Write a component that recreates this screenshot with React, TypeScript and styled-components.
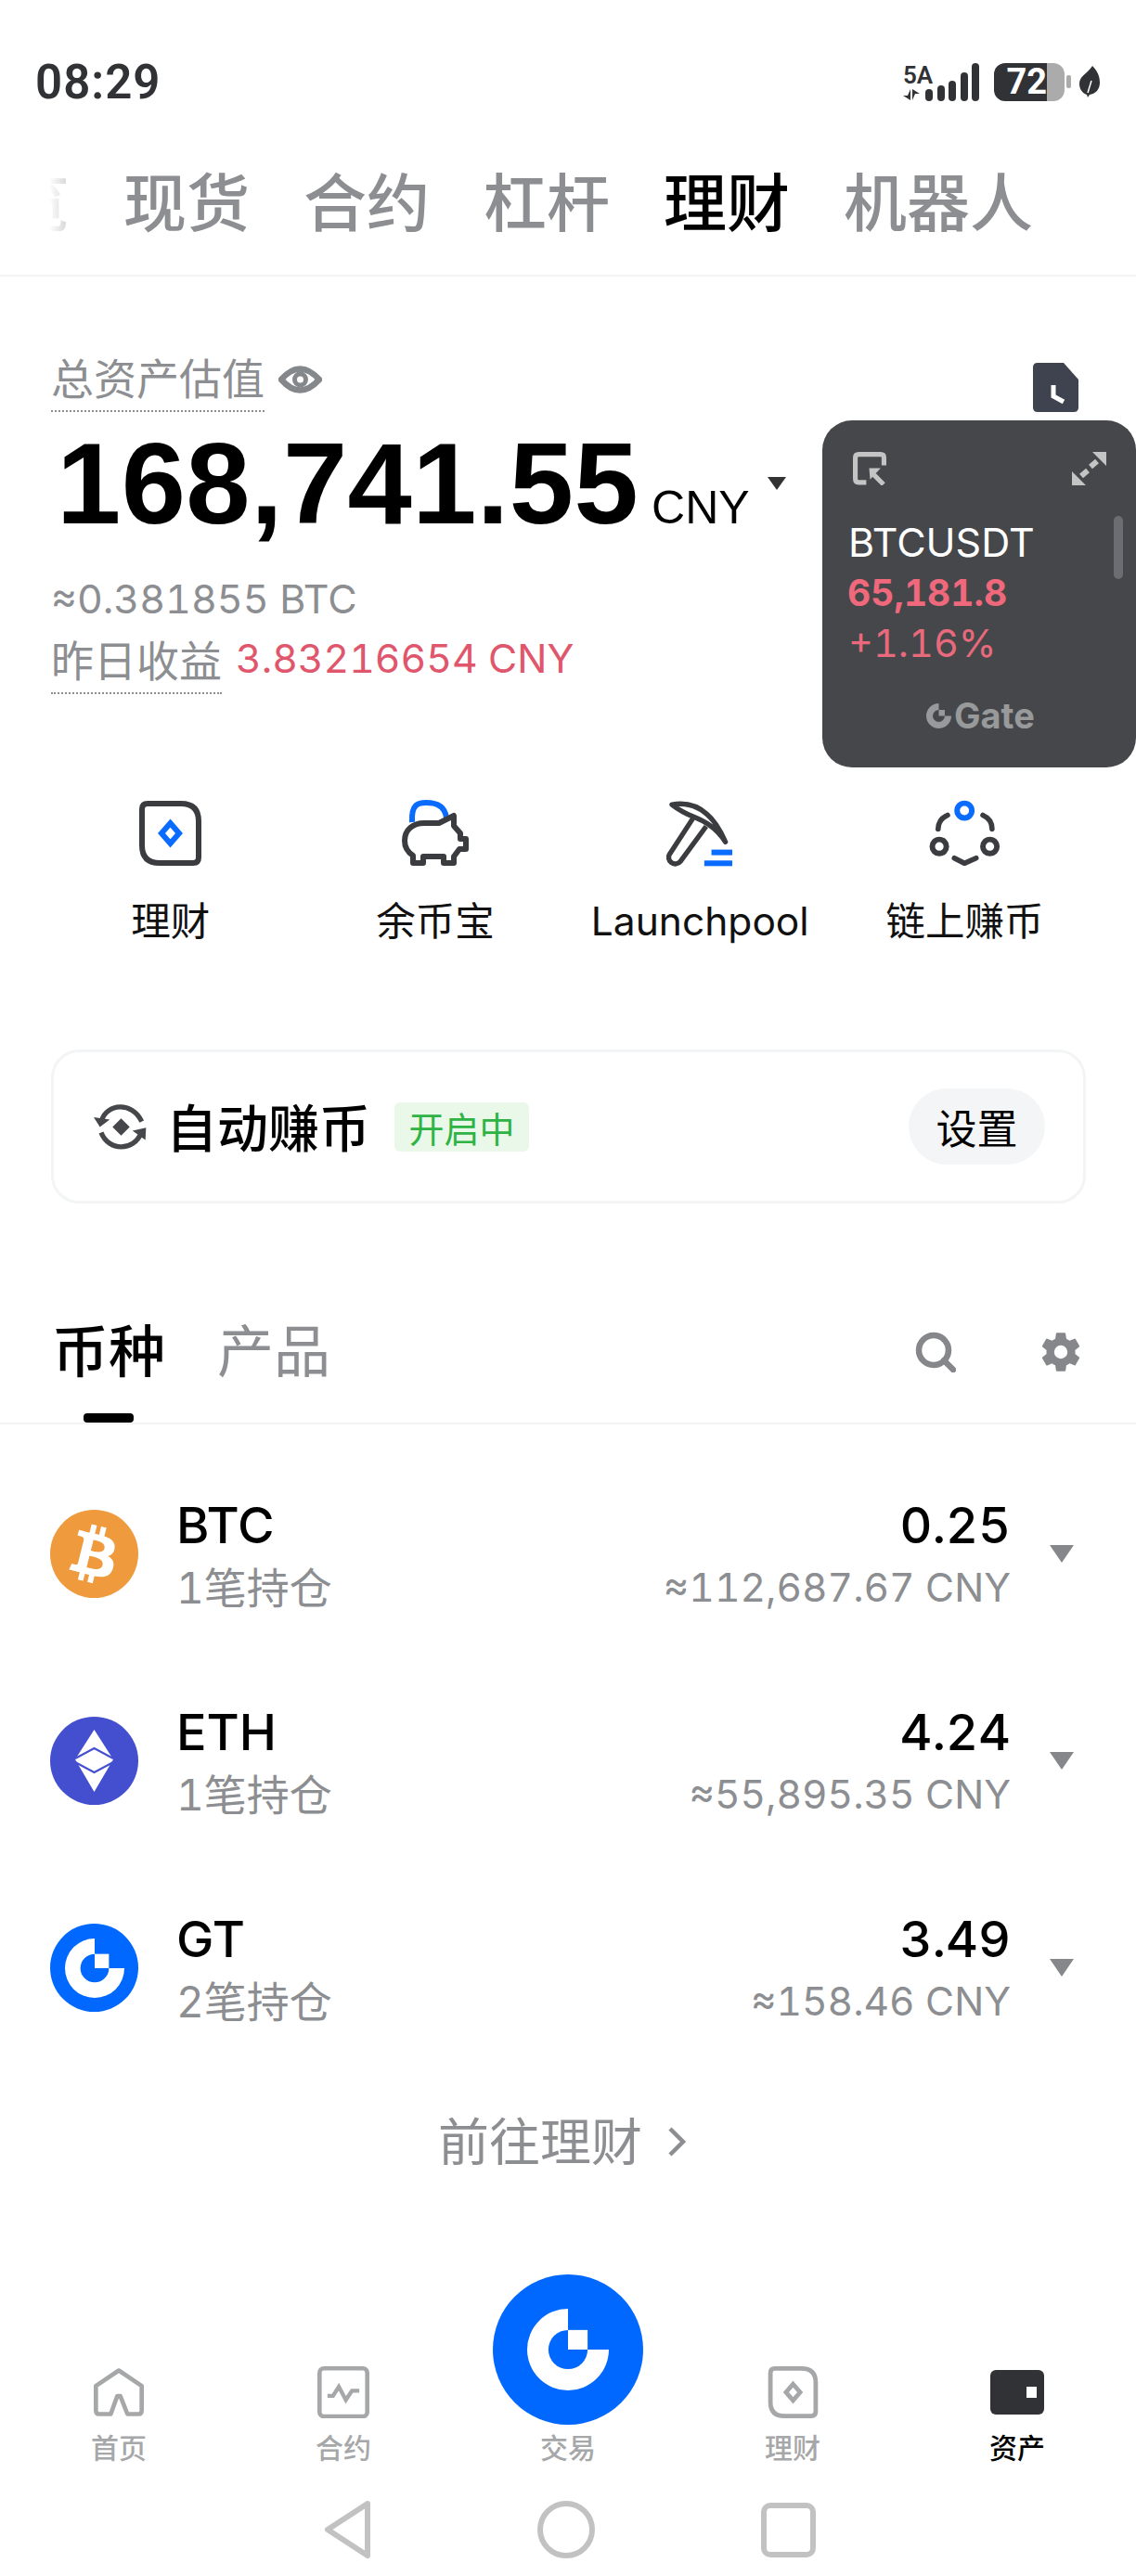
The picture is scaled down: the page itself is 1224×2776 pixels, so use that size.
import React from "react";
import styled, { createGlobalStyle } from "styled-components";
import { FaBtc } from "react-icons/fa";
import { IoSettingsSharp } from "react-icons/io5";

const FONT = `Inter, "Noto Sans CJK SC", sans-serif`;
const GRAY = "#8c8e91";
const DARK = "#3a3c3f";
const BLUE = "#0a6cff";
const NAV_GRAY = "#a6a7a9";

const GlobalStyle = createGlobalStyle`
  html, body {
    margin: 0;
    padding: 0;
    background: #fff;
  }
  * {
    box-sizing: border-box;
  }
`;

const Page = styled.div`
  position: relative;
  width: 1224px;
  height: 2776px;
  overflow: hidden;
  display: flex;
  flex-direction: column;
  background: #fff;
  color: #000;
  font-family: ${FONT};
  font-variant-numeric: tabular-nums;
`;

// Status bar
const StatusBar = styled.div`
  height: 136px;
  padding: 40px 39px 0 38px;
  display: flex;
  align-items: center;
  justify-content: space-between;
`;

const Clock = styled.div`
  font-size: 51px;
  font-weight: 600;
  color: #303235;
  font-family: Roboto, sans-serif;
  letter-spacing: 1px;
`;

const StatusIcons = styled.div`
  display: flex;
  align-items: center;
`;

const NetType = styled.div`
  width: 34px;
  display: flex;
  flex-direction: column;
  align-items: flex-start;
  gap: 3px;
  margin-right: -10px;
  font-size: 26px;
  line-height: 24px;
  font-weight: 600;
  color: #303235;
  font-family: Roboto, sans-serif;
`;

const Bars = styled.div`
  height: 41px;
  margin-right: 16px;
  display: flex;
  align-items: flex-end;
  gap: 4.5px;
`;

const Bar = styled.span<{ $h: number }>`
  width: 8px;
  height: ${(p) => p.$h}px;
  border-radius: 4px;
  background: #303235;
`;

const Battery = styled.div`
  width: 76px;
  height: 41px;
  border-radius: 12px;
  padding-right: 19px;
  display: flex;
  align-items: center;
  justify-content: flex-end;
  background: linear-gradient(90deg, #303235 0 57px, #ababab 57px);
  color: #fff;
  font-size: 38px;
  font-weight: 700;
  font-family: Roboto, sans-serif;
`;

const BatteryNub = styled.span`
  width: 5px;
  height: 14px;
  margin: 0 9px 0 2px;
  border-radius: 2px;
  background: #ababab;
`;

// Top tabs
const TopTabs = styled.div`
  height: 162px;
  padding: 6px 0 0 53px;
  display: flex;
  align-items: center;
  gap: 58px;
  border-bottom: 2px solid #f3f3f3;
`;

const TopTab = styled.div<{ $active?: boolean }>`
  font-size: 68px;
  line-height: 80px;
  font-weight: 500;
  color: ${(p) => (p.$active ? "#000" : GRAY)};
`;

const ClippedTab = styled(TopTab)`
  width: 22px;
  overflow: hidden;
  display: flex;
  justify-content: flex-end;
  white-space: nowrap;
  color: #d0d0d0;
  mask-image: linear-gradient(90deg, transparent, #000);
`;

// Asset summary
const Summary = styled.section`
  padding: 80px 62px 0 55px;
`;

const LabelRow = styled.div`
  display: flex;
  align-items: center;
`;

const DottedLabel = styled.span`
  font-size: 46px;
  line-height: 60px;
  color: ${GRAY};
  padding-bottom: 4px;
  border-bottom: 2px dotted ${GRAY};
`;

const EyeIcon = styled.svg`
  margin: 0 0 4px 15px;
`;

const DocIcon = styled.svg`
  margin: 13px 0 0 auto;
`;

const AmountRow = styled.div`
  height: 130px;
  margin-top: 12px;
  padding-left: 6px;
  display: flex;
  align-items: baseline;
  line-height: 130px;
`;

const Amount = styled.span`
  font-size: 124.500px;
  font-weight: 700;
  font-family: "Liberation Sans", sans-serif;
  letter-spacing: 0.4px;
`;

const AmountUnit = styled.span`
  margin-left: 14px;
  font-size: 50px;
  font-family: "Liberation Sans", sans-serif;
`;

const Caret = styled.span<{ $w: number; $h: number; $color: string }>`
  width: 0;
  height: 0;
  border-left: ${(p) => p.$w / 2}px solid transparent;
  border-right: ${(p) => p.$w / 2}px solid transparent;
  border-top: ${(p) => p.$h}px solid ${(p) => p.$color};
`;

const UnitCaret = styled(Caret)`
  margin-left: 19px;
  align-self: center;
`;

const BtcValue = styled.div`
  margin-top: 31px;
  font-size: 43px;
  line-height: 56px;
  color: ${GRAY};
`;

const YesterdayRow = styled.div`
  margin-top: 9px;
  display: flex;
  align-items: flex-start;
`;

const Profit = styled.span`
  margin-left: 15px;
  font-size: 42.700px;
  line-height: 56px;
  color: #e0566c;
`;

// Floating market window
const MarketWidget = styled.aside`
  position: absolute;
  top: 453px;
  right: 0;
  width: 338px;
  height: 374px;
  padding-top: 34px;
  border-radius: 32px;
  background: #45474a;
`;

const WidgetTools = styled.div`
  height: 36px;
  padding: 0 32px 0 33px;
  display: flex;
  justify-content: space-between;
`;

const WidgetSymbol = styled.div`
  margin: 36px 0 0 28px;
  font-size: 43px;
  line-height: 50px;
  color: #fff;
`;

const WidgetPrice = styled.div`
  margin: 5px 0 0 27px;
  font-size: 39px;
  line-height: 50px;
  font-weight: 700;
  color: #f0687c;
`;

const WidgetChange = styled.div`
  margin: 4px 0 0 28px;
  font-size: 41.500px;
  line-height: 50px;
  color: #e86a7c;
`;

const WidgetBrand = styled.div`
  margin-top: 38px;
  padding-left: 112px;
  display: flex;
  align-items: center;
  gap: 3px;
  height: 30px;
  font-size: 38px;
  font-weight: 700;
  color: #97999b;
`;

const WidgetScroll = styled.span`
  position: absolute;
  top: 103px;
  right: 14px;
  width: 10px;
  height: 68px;
  border-radius: 5px;
  background: #6b6d72;
`;

// Quick actions
const Actions = styled.div`
  margin-top: 113px;
  padding-left: 41px;
  display: grid;
  grid-template-columns: repeat(4, 285.3px);
`;

const Action = styled.div`
  display: flex;
  flex-direction: column;
  align-items: center;
  gap: 34px;
`;

const ActionIcon = styled.div`
  height: 73px;
  display: flex;
  align-items: center;
  justify-content: center;
`;

const ActionLabel = styled.div`
  font-size: 42.500px;
  line-height: 50px;
  white-space: nowrap;
  color: #111;
`;

// Auto earn card
const AutoCard = styled.div`
  margin: 113px 54px 0 55px;
  height: 166px;
  padding: 0 41px 0 43px;
  display: flex;
  align-items: center;
  border: 3px solid #f3f4f5;
  border-radius: 30px;
`;

const AutoTitle = styled.div`
  margin: 0 0 4px 20px;
  font-size: 55px;
  font-weight: 500;
`;

const StatusBadge = styled.div`
  margin-left: 26px;
  width: 145px;
  height: 53px;
  display: flex;
  align-items: center;
  justify-content: center;
  border-radius: 6px;
  background: #e9f8e9;
  color: #2fb344;
  font-size: 38px;
`;

const SettingsButton = styled.button`
  margin-left: auto;
  width: 147px;
  height: 82px;
  border: none;
  border-radius: 41px;
  background: #f4f5f6;
  color: #000;
  font-family: ${FONT};
  font-size: 44px;
`;

// List tabs
const ListTabs = styled.div`
  margin-top: 80px;
  padding: 50px 58px 0 56px;
  display: flex;
  align-items: flex-start;
  gap: 56px;
  border-bottom: 2px solid #f3f3f3;
`;

const ListTab = styled.div<{ $active?: boolean }>`
  display: flex;
  flex-direction: column;
  align-items: center;
  font-size: 61px;
  line-height: 60px;
  font-weight: ${(p) => (p.$active ? 500 : 400)};
  color: ${(p) => (p.$active ? "#000" : GRAY)};
`;

const TabMark = styled.span<{ $active?: boolean }>`
  width: 54px;
  height: 10px;
  margin-top: 36px;
  border-radius: 4px;
  background: ${(p) => (p.$active ? "#000" : "transparent")};
`;

const ListTools = styled.div`
  margin-left: auto;
  height: 60px;
  display: flex;
  align-items: center;
  gap: 90px;
`;

// Coin rows
const CoinList = styled.div`
  margin-top: 28px;
`;

const CoinRow = styled.div`
  height: 223px;
  padding: 0 67px 0 54px;
  display: flex;
  align-items: center;
`;

const CoinBadge = styled.div<{ $bg: string }>`
  width: 95px;
  height: 95px;
  flex: none;
  display: flex;
  align-items: center;
  justify-content: center;
  border-radius: 50%;
  background: ${(p) => p.$bg};
  color: #fff;
`;

const CoinText = styled.div<{ $right?: boolean }>`
  display: flex;
  flex-direction: column;
  align-items: ${(p) => (p.$right ? "flex-end" : "flex-start")};
  margin: ${(p) => (p.$right ? "0 42px 0 auto" : "0 0 0 41px")};
`;

const CoinMain = styled.div`
  font-size: 54px;
  line-height: 60px;
  font-weight: 500;
`;

const CoinSub = styled.div<{ $value?: boolean }>`
  margin-top: 12px;
  font-size: ${(p) => (p.$value ? 42.5 : 46)}px;
  line-height: 50px;
  color: ${GRAY};
`;

const MoreLink = styled.div`
  margin-top: 41px;
  padding-right: 12px;
  display: flex;
  align-items: center;
  justify-content: center;
  gap: 26px;
  font-size: 55px;
  line-height: 70px;
  color: ${GRAY};
`;

// Bottom navigation
const BottomArea = styled.div`
  margin-top: auto;
  padding-bottom: 18px;
`;

const TabBar = styled.nav`
  padding: 0 7px;
  display: grid;
  grid-template-columns: repeat(5, 242px);
  align-items: end;
`;

const NavItem = styled.div<{ $active?: boolean }>`
  display: flex;
  flex-direction: column;
  align-items: center;
  font-size: 30px;
  line-height: 40px;
  font-weight: 500;
  color: ${(p) => (p.$active ? "#000" : NAV_GRAY)};
`;

const NavIcon = styled.div`
  height: 60px;
  margin-bottom: 10px;
  display: flex;
  align-items: center;
  justify-content: center;
`;

const TradeCircle = styled.div`
  width: 162px;
  height: 162px;
  margin-bottom: 5px;
  display: flex;
  align-items: center;
  justify-content: center;
  border-radius: 50%;
  background: #0068ff;
`;

const SystemNav = styled.div`
  margin-top: 36px;
  padding-left: 4px;
  height: 64px;
  display: flex;
  align-items: center;
  justify-content: center;
  gap: 179px;
`;

const GateMark = ({ size, color }: { size: number; color: string }) => (
  <svg width={size} height={size} viewBox="0 0 100 100">
    <path d="M50 0A50 50 0 1 0 100 50H74A24 24 0 1 1 50 26Z" fill={color} />
    <rect x="50" y="26" width="24" height="24" fill={color} />
  </svg>
);

const FinanceCard = ({ w, h, sw, color, accent }: { w: number; h: number; sw: number; color: string; accent: string }) => (
  <svg width={w} height={h} viewBox="0 0 67 70">
    <path d="M9 3H45Q64 3 64 22V61Q64 67 58 67H22Q3 67 3 48V9Q3 3 9 3Z" fill="none" stroke={color} strokeWidth={sw} />
    <path d="M33.500 24L43 35L33.500 46L24 35Z" fill="none" stroke={accent} strokeWidth={sw} />
  </svg>
);

const Coins = [
  { symbol: "BTC", sub: "1笔持仓", amount: "0.25", value: "≈112,687.67 CNY" },
  { symbol: "ETH", sub: "1笔持仓", amount: "4.24", value: "≈55,895.35 CNY" },
  { symbol: "GT", sub: "2笔持仓", amount: "3.49", value: "≈158.46 CNY" },
];

const coinIcon = (symbol: string) => {
  if (symbol === "BTC") {
    return (
      <CoinBadge $bg="#f09a3e">
        <FaBtc size={62} style={{ transform: "rotate(14deg)" }} />
      </CoinBadge>
    );
  }
  if (symbol === "ETH") {
    return (
      <CoinBadge $bg="#444fd0">
        <svg width="95" height="95" viewBox="0 0 95 95">
          <path d="M47.500 14L68 46L47.500 81L27 46Z" fill="#fff" />
          <path d="M27 45L47.500 34L68 45" fill="none" stroke="#444fd0" strokeWidth="2" />
          <path d="M27 49L47.500 60L68 49" fill="none" stroke="#444fd0" strokeWidth="2" />
        </svg>
      </CoinBadge>
    );
  }
  return (
    <CoinBadge $bg="#0068ff">
      <GateMark size={64} color="#fff" />
    </CoinBadge>
  );
};

export default function App() {
  return (
    <Page>
      <GlobalStyle />

      <StatusBar>
        <Clock>08:29</Clock>
        <StatusIcons>
          <NetType>
            5A
            <svg width="18" height="12" viewBox="0 0 18 12">
              <path d="M8 0V12L0 7H5ZM10 12V0L18 5H13Z" fill="#303235" />
            </svg>
          </NetType>
          <Bars>
            {[13, 17, 22, 31, 41].map((h) => (
              <Bar key={h} $h={h} />
            ))}
          </Bars>
          <Battery>72</Battery>
          <BatteryNub />
          <svg width="22" height="34" viewBox="0 0 22 34">
            <path d="M14 0C20 6 22 12 22 18C22 26 17 30 11 31L9 34L8 31C3 29 0 25 0 19C0 11 9 8 14 0Z" fill="#303235" />
            <path d="M9 29L13 16" stroke="#fff" strokeWidth="1.500" />
          </svg>
        </StatusIcons>
      </StatusBar>

      <TopTabs>
        <ClippedTab>总览</ClippedTab>
        <TopTab>现货</TopTab>
        <TopTab>合约</TopTab>
        <TopTab>杠杆</TopTab>
        <TopTab $active>理财</TopTab>
        <TopTab>机器人</TopTab>
      </TopTabs>

      <Summary>
        <LabelRow>
          <DottedLabel>总资产估值</DottedLabel>
          <EyeIcon width="47" height="30" viewBox="0 0 47 30">
            <path d="M3 15Q23 -8 44 15Q23 38 3 15Z" fill="none" stroke="#85888b" strokeWidth="6.500" strokeLinejoin="round" />
            <circle cx="23.500" cy="15" r="6" fill="none" stroke="#85888b" strokeWidth="5" />
          </EyeIcon>
          <DocIcon width="49" height="53" viewBox="0 0 49 53">
            <path d="M5 0H33L49 18V48Q49 53 44 53H5Q0 53 0 48V5Q0 0 5 0Z" fill="#3f4350" />
            <path d="M22 24V36L33 42" fill="none" stroke="#fff" strokeWidth="5" />
          </DocIcon>
        </LabelRow>
        <AmountRow>
          <Amount>168,741.55</Amount>
          <AmountUnit>CNY</AmountUnit>
          <UnitCaret $w={20} $h={14} $color="#333" />
        </AmountRow>
        <BtcValue>≈0.381855 BTC</BtcValue>
        <YesterdayRow>
          <DottedLabel>昨日收益</DottedLabel>
          <Profit>3.83216654 CNY</Profit>
        </YesterdayRow>
      </Summary>

      <MarketWidget>
        <WidgetTools>
          <svg width="36" height="36" viewBox="0 0 35 35">
            <path d="M14 32H6Q2.500 32 2.500 28V6Q2.500 2.500 6 2.500H29Q32.500 2.500 32.500 6V14" fill="none" stroke="#c4c4c4" strokeWidth="5" />
            <path d="M32 34L21 23" stroke="#c4c4c4" strokeWidth="5" />
            <path d="M17 17H29L18 29Z" fill="#c4c4c4" />
          </svg>
          <svg width="37" height="36" viewBox="0 0 37 36">
            <path d="M22 0H37V15ZM0 21V36H15Z" fill="#c4c4c4" />
            <path d="M27 10L20 16M17 20L10 26" stroke="#c4c4c4" strokeWidth="6" />
          </svg>
        </WidgetTools>
        <WidgetScroll />
        <WidgetSymbol>BTCUSDT</WidgetSymbol>
        <WidgetPrice>65,181.8</WidgetPrice>
        <WidgetChange>+1.16%</WidgetChange>
        <WidgetBrand>
          <GateMark size={27} color="#97999b" />
          Gate
        </WidgetBrand>
      </MarketWidget>

      <Actions>
        <Action>
          <ActionIcon>
            <FinanceCard w={67} h={70} sw={6} color={DARK} accent={BLUE} />
          </ActionIcon>
          <ActionLabel>理财</ActionLabel>
        </Action>
        <Action>
          <ActionIcon>
            <svg width="72" height="72" viewBox="0 0 72 72">
              <path d="M11 24C10 4 18 3 26 3C35 3 46 5 48 19" fill="none" stroke={BLUE} strokeWidth="6" />
              <path
                d="M3 44C3 32 12 25 24 25H40L56 17V28L63 36V42H69V53H62L56 61V68H45V61H23V68H12V60C6 56 3 50 3 44Z"
                fill="#fff"
                stroke={DARK}
                strokeWidth="6"
                strokeLinejoin="round"
              />
            </svg>
          </ActionIcon>
          <ActionLabel>余币宝</ActionLabel>
        </Action>
        <Action>
          <ActionIcon>
            <svg width="72" height="72" viewBox="0 0 215 215">
              <path d="M18 15Q130 -5 190 135Q155 80 90 55Q50 40 18 15Z" fill="none" stroke={DARK} strokeWidth="16" strokeLinejoin="round" />
              <path d="M85 60L12 172A20 20 0 0 0 45 198L128 85" fill="none" stroke={DARK} strokeWidth="16" />
              <rect x="145" y="160" width="67" height="18" fill={BLUE} />
              <rect x="122" y="195" width="90" height="18" fill={BLUE} />
            </svg>
          </ActionIcon>
          <ActionLabel>Launchpool</ActionLabel>
        </Action>
        <Action>
          <ActionIcon>
            <svg width="78" height="71" viewBox="905 45 235 215">
              <circle cx="1020" cy="80" r="24" fill="none" stroke={BLUE} strokeWidth="18" />
              <circle cx="938" cy="197" r="23" fill="none" stroke={DARK} strokeWidth="18" />
              <circle cx="1103" cy="197" r="23" fill="none" stroke={DARK} strokeWidth="18" />
              <path
                d="M965 95Q935 108 934 140M1080 95Q1110 108 1110 140M987 235L1020 252L1058 235"
                fill="none"
                stroke={DARK}
                strokeWidth="17"
                strokeLinecap="round"
              />
            </svg>
          </ActionIcon>
          <ActionLabel>链上赚币</ActionLabel>
        </Action>
      </Actions>

      <AutoCard>
        <svg width="58" height="53" viewBox="36 30 175 160">
          <path d="M62 88C78 35 160 25 192 92M60 128C85 190 165 190 190 130" fill="none" stroke="#45474a" strokeWidth="16" />
          <path d="M36 78L88 86L56 110ZM162 122L206 112L204 152Z" fill="#45474a" />
          <path d="M125 82L153 110L125 138L97 110Z" fill="#45474a" />
        </svg>
        <AutoTitle>自动赚币</AutoTitle>
        <StatusBadge>开启中</StatusBadge>
        <SettingsButton>设置</SettingsButton>
      </AutoCard>

      <ListTabs>
        <ListTab $active>
          币种
          <TabMark $active />
        </ListTab>
        <ListTab>
          产品
          <TabMark />
        </ListTab>
        <ListTools>
          <svg width="44" height="44" viewBox="0 0 44 44">
            <circle cx="20" cy="20" r="16" fill="none" stroke="#85878a" strokeWidth="6.500" />
            <path d="M31 31L41 41" stroke="#85878a" strokeWidth="6.500" strokeLinecap="round" />
          </svg>
          <IoSettingsSharp size={46} color="#85878a" />
        </ListTools>
      </ListTabs>

      <CoinList>
        {Coins.map((c) => (
          <CoinRow key={c.symbol}>
            {coinIcon(c.symbol)}
            <CoinText>
              <CoinMain>{c.symbol}</CoinMain>
              <CoinSub>{c.sub}</CoinSub>
            </CoinText>
            <CoinText $right>
              <CoinMain>{c.amount}</CoinMain>
              <CoinSub $value>{c.value}</CoinSub>
            </CoinText>
            <Caret $w={27} $h={19} $color="#85878a" />
          </CoinRow>
        ))}
      </CoinList>

      <MoreLink>
        前往理财
        <svg width="22" height="34" viewBox="0 0 22 34">
          <path d="M4 3L18 17L4 31" fill="none" stroke={GRAY} strokeWidth="4.500" />
        </svg>
      </MoreLink>

      <BottomArea>
        <TabBar>
          <NavItem>
            <NavIcon>
              <svg width="54" height="52" viewBox="33 45 162 155">
                <path
                  d="M114 52L188 102V182Q188 193 178 193H142L119 135H109L88 193H50Q40 193 40 182V102Z"
                  fill="none"
                  stroke={NAV_GRAY}
                  strokeWidth="14"
                  strokeLinejoin="round"
                />
              </svg>
            </NavIcon>
            首页
          </NavItem>
          <NavItem>
            <NavIcon>
              <svg width="56" height="56" viewBox="755 28 170 170">
                <rect x="762" y="35" width="156" height="157" rx="14" fill="none" stroke={NAV_GRAY} strokeWidth="14" />
                <path d="M788 125H806L825 95L848 138L868 108H892" fill="none" stroke={NAV_GRAY} strokeWidth="13" />
              </svg>
            </NavIcon>
            合约
          </NavItem>
          <NavItem>
            <TradeCircle>
              <GateMark size={88} color="#fff" />
            </TradeCircle>
            交易
          </NavItem>
          <NavItem>
            <NavIcon>
              <FinanceCard w={55} h={56} sw={6} color={NAV_GRAY} accent={NAV_GRAY} />
            </NavIcon>
            理财
          </NavItem>
          <NavItem $active>
            <NavIcon>
              <svg width="58" height="48" viewBox="0 0 58 48">
                <rect width="58" height="48" rx="6" fill="#303235" />
                <rect x="39" y="18" width="11" height="12" fill="#fff" />
              </svg>
            </NavIcon>
            资产
          </NavItem>
        </TabBar>
        <SystemNav>
          <svg width="51" height="64" viewBox="0 0 51 64">
            <path d="M47 4L4 32L47 60Z" fill="none" stroke="#c2c2c2" strokeWidth="6" strokeLinejoin="round" />
          </svg>
          <svg width="62" height="62" viewBox="0 0 62 62">
            <circle cx="31" cy="31" r="28" fill="none" stroke="#c2c2c2" strokeWidth="6" />
          </svg>
          <svg width="59" height="59" viewBox="0 0 59 59">
            <rect x="3" y="3" width="53" height="53" rx="7" fill="none" stroke="#c2c2c2" strokeWidth="6" />
          </svg>
        </SystemNav>
      </BottomArea>
    </Page>
  );
}
